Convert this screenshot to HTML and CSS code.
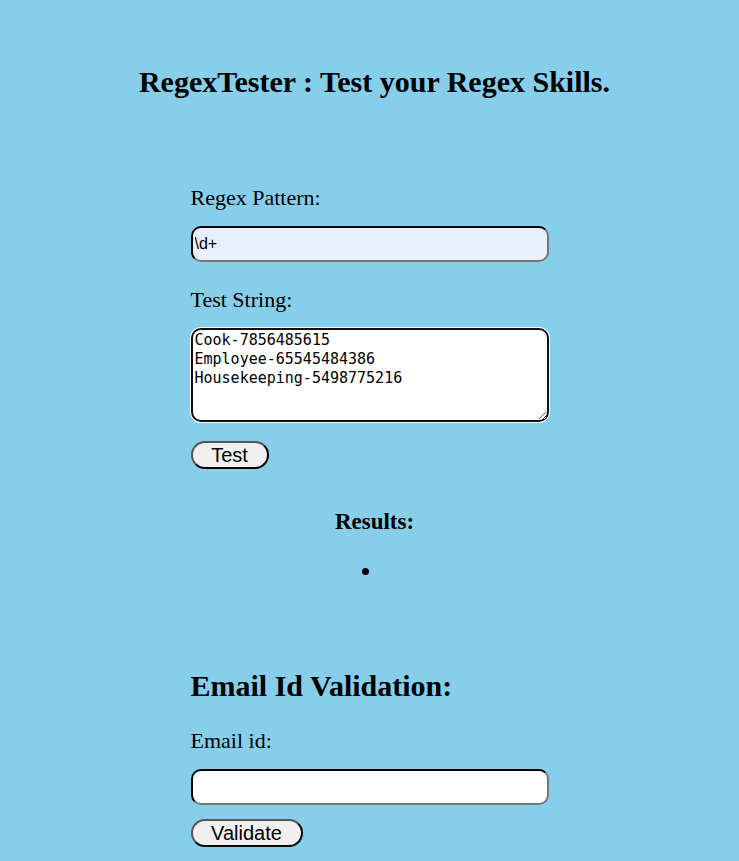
FILE: index.html
```html
<!DOCTYPE html>
<html>
<head>
<meta charset="utf-8">
<title>RegexTester</title>
<link rel="stylesheet" href="styles.css">
</head>
<body>
<h2 class="title">RegexTester : Test your Regex Skills.</h2>
<div class="form form-regex">
  <label class="label">Regex Pattern:</label>
  <input class="field field-filled" type="text" value="\d+">
  <label class="label">Test String:</label>
  <textarea class="area">Cook-7856485615
Employee-65545484386
Housekeeping-5498775216</textarea>
  <button class="btn btn-test">Test</button>
</div>
<div class="results">
  <h3 class="results-title">Results:</h3>
  <ul class="results-list"><li></li></ul>
</div>
<div class="form email">
  <h2 class="email-title">Email Id Validation:</h2>
  <label class="label">Email id:</label>
  <input class="field field-email" type="text">
  <button class="btn btn-validate">Validate</button>
</div>
</body>
</html>
```
FILE: styles.css
```css
html, body {
  margin: 0;
  padding: 0;
}
body {
  background: #87ceeb;
  font-family: "Liberation Serif", "Times New Roman", serif;
  color: #000;
}
.title {
  margin: 0;
  padding-top: 64px;
  padding-left: 10px;
  text-align: center;
  font-size: 30px;
  line-height: 36px;
  font-weight: bold;
}
.form {
  width: 358px;
  margin: 0 auto;
  display: flex;
  flex-direction: column;
  align-items: flex-start;
}
.form-regex {
  padding-top: 86px;
}
.label {
  font-size: 22px;
  line-height: 24px;
  margin-bottom: 16px;
}
.field {
  box-sizing: border-box;
  width: 358px;
  height: 36px;
  border: 2px inset #222;
  border-right-color: #777;
  border-bottom-color: #777;
  border-radius: 10px;
  background: #fff;
  font-family: "Liberation Sans", Arial, sans-serif;
  font-size: 16px;
  padding: 0 2px;
  margin-bottom: 26px;
  outline: none;
}
.field-filled {
  background: #e8f0fe;
}
.field-email {
  margin-bottom: 14px;
}
.area {
  box-sizing: border-box;
  width: 358px;
  height: 94px;
  border: 2px solid #111;
  border-radius: 10px;
  box-shadow: 0 0 0 1px #fff;
  background: #fff;
  font-family: "DejaVu Sans Mono", monospace;
  font-size: 15px;
  line-height: 19px;
  padding: 1px 2px;
  margin-bottom: 19px;
  resize: vertical;
}
.btn {
  box-sizing: border-box;
  height: 28px;
  border: 2px outset #444;
  border-top-color: #555;
  border-left-color: #555;
  border-right-color: #111;
  border-bottom-color: #111;
  border-radius: 14px;
  background: #f0f0f0;
  font-family: "Liberation Sans", Arial, sans-serif;
  font-size: 20px;
  line-height: 22px;
  padding: 0;
  color: #000;
}
.btn-test {
  width: 78px;
}
.btn-validate {
  width: 112px;
}
.results {
  padding-left: 10px;
  text-align: center;
  margin-top: 40px;
}
.results-title {
  margin: 0;
  font-size: 23px;
  line-height: 26px;
}
.results-list {
  margin: 24px 0 0;
  padding: 0 0 0 4px;
  list-style-position: inside;
  height: 24px;
  font-size: 22px;
  line-height: 24px;
}
.results-list li {
  height: 24px;
}
.email {
  padding-top: 86px;
}
.email-title {
  margin: 0 0 26px;
  font-size: 30px;
  line-height: 34px;
}
```
